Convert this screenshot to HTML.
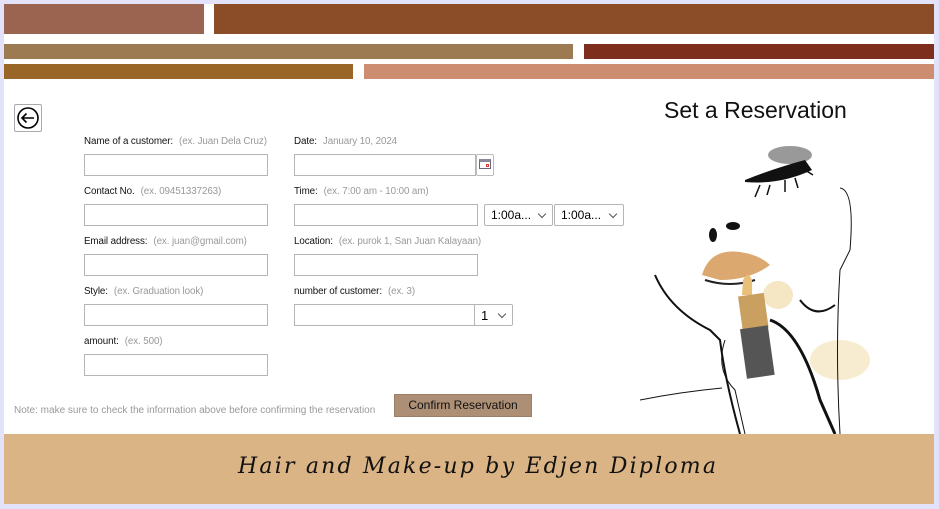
<!DOCTYPE html>
<html><head><meta charset="utf-8"><style>
*{margin:0;padding:0;box-sizing:border-box}
body{width:939px;height:509px;background:#e2e2fb;position:relative;overflow:hidden;font-family:"Liberation Sans",sans-serif}
.a{position:absolute}
.main{left:4px;top:4px;width:930px;height:500px;background:#fff}
.lbl{position:absolute;font-size:9.8px;color:#111;white-space:nowrap;letter-spacing:-0.1px}
.lbl i{font-style:normal;color:#999;margin-left:6px}
.in{position:absolute;border:1px solid #b5b5b5;background:#fff;height:22px}
.sel{position:absolute;border:1px solid #b5b5b5;border-radius:2px;height:22px;font-size:12px;padding:3px 0 0 6px;background:#fff}
.sel:after{content:"";position:absolute;right:7px;top:6px;width:5px;height:5px;border-right:1px solid #555;border-bottom:1px solid #555;transform:rotate(45deg)}
</style></head><body>
<div class="a main"></div>
<div class="a" style="left:4px;top:4px;width:200px;height:30px;background:#9b6450"></div>
<div class="a" style="left:214px;top:4px;width:720px;height:30px;background:#8a4d27"></div>
<div class="a" style="left:4px;top:44px;width:569px;height:15px;background:#9c7b52"></div>
<div class="a" style="left:584px;top:44px;width:350px;height:15px;background:#7d2e1c"></div>
<div class="a" style="left:4px;top:64px;width:349px;height:15px;background:#996628"></div>
<div class="a" style="left:364px;top:64px;width:570px;height:15px;background:#cc8d71"></div>

<div class="a" style="left:14px;top:104px;width:28px;height:28px;border:1px solid #aaa;border-radius:2px"></div>
<svg class="a" style="left:15px;top:105px" width="26" height="26" viewBox="0 0 26 26"><circle cx="13" cy="13" r="10" fill="none" stroke="#000" stroke-width="1.6"/><path d="M19 13H7M11.5 8.5L7 13l4.5 4.5" fill="none" stroke="#000" stroke-width="1.6"/></svg>

<div class="a" style="left:664px;top:97px;font-size:23px;color:#111">Set a Reservation</div>

<div class="lbl" style="left:84px;top:136px">Name of a customer:<i>(ex. Juan Dela Cruz)</i></div>
<div class="in" style="left:84px;top:154px;width:184px"></div>
<div class="lbl" style="left:84px;top:186px">Contact No.<i>(ex. 09451337263)</i></div>
<div class="in" style="left:84px;top:204px;width:184px"></div>
<div class="lbl" style="left:84px;top:236px">Email address:<i>(ex. juan@gmail.com)</i></div>
<div class="in" style="left:84px;top:254px;width:184px"></div>
<div class="lbl" style="left:84px;top:286px">Style:<i>(ex. Graduation look)</i></div>
<div class="in" style="left:84px;top:304px;width:184px"></div>
<div class="lbl" style="left:84px;top:336px">amount:<i>(ex. 500)</i></div>
<div class="in" style="left:84px;top:354px;width:184px"></div>

<div class="lbl" style="left:294px;top:136px">Date:<i>January 10, 2024</i></div>
<div class="in" style="left:294px;top:154px;width:182px"></div>
<div class="a" style="left:476px;top:154px;width:18px;height:22px;border:1px solid #bbb;border-radius:2px"></div>
<div class="a" style="left:479px;top:159px;width:12px;height:10px;border:1px solid #667;border-top:3px solid #889"></div>
<div class="a" style="left:486px;top:164px;width:3px;height:3px;border:1px solid #d33"></div>
<div class="lbl" style="left:294px;top:186px">Time:<i>(ex. 7:00 am - 10:00 am)</i></div>
<div class="in" style="left:294px;top:204px;width:184px"></div>
<div class="sel" style="left:484px;top:204px;width:69px">1:00a...</div>
<div class="sel" style="left:554px;top:204px;width:70px">1:00a...</div>
<div class="lbl" style="left:294px;top:236px">Location:<i>(ex. purok 1, San Juan Kalayaan)</i></div>
<div class="in" style="left:294px;top:254px;width:184px"></div>
<div class="lbl" style="left:294px;top:286px">number of customer:<i>(ex. 3)</i></div>
<div class="in" style="left:294px;top:304px;width:181px"></div>
<div class="sel" style="left:474px;top:304px;width:39px;font-size:13px">1</div>

<div class="a" style="left:14px;top:405px;font-size:10px;color:#999">Note: make sure to check the information above before confirming the reservation</div>
<div class="a" style="left:394px;top:394px;width:138px;height:23px;background:#ac8f74;border:1px solid #9a8068;font-size:12px;color:#111;text-align:center;line-height:21px">Confirm Reservation</div>

<svg class="a" style="left:640px;top:130px" width="250" height="304" viewBox="0 0 250 304">
<ellipse cx="150" cy="25" rx="22" ry="9" fill="#555" opacity=".6"/>
<path d="M105 50 Q135 38 165 30 L172 40 Q140 55 105 52Z" fill="#111"/>
<path d="M120 55l-5 12M130 55l-3 10M145 50l0 12M155 48l3 10M165 40l8 5" stroke="#111" stroke-width="1.5"/>
<ellipse cx="73" cy="105" rx="4" ry="7" fill="#111"/><ellipse cx="93" cy="96" rx="7" ry="4" fill="#111"/>
<path d="M62 145 Q70 118 100 122 Q120 125 130 135 Q110 150 80 150Z" fill="#dba870"/>
<path d="M65 150 Q90 158 115 150" stroke="#222" stroke-width="2" fill="none"/>
<ellipse cx="138" cy="165" rx="15" ry="14" fill="#f5e7c4"/>
<ellipse cx="200" cy="230" rx="30" ry="20" fill="#f8ecd0"/>
<path d="M103 150 Q108 140 112 150 L112 165 L102 165Z" fill="#e8c07a"/>
<rect x="100" y="165" width="26" height="35" fill="#c9a060" transform="rotate(-8 110 180)"/>
<rect x="103" y="198" width="28" height="50" fill="#555" transform="rotate(-8 110 220)"/>
<path d="M15 145 Q30 180 70 200 L80 210 Q85 250 100 304" stroke="#111" stroke-width="2" fill="none"/>
<path d="M130 190 Q160 200 180 270 L195 304" stroke="#111" stroke-width="3" fill="none"/>
<path d="M85 210 Q75 240 95 260 L105 304" stroke="#111" stroke-width="1" fill="none"/>
<path d="M200 58 Q215 60 210 120 L200 140 Q195 220 200 304" stroke="#111" stroke-width="1" fill="none"/>
<path d="M160 170 Q175 190 195 175" stroke="#111" stroke-width="2" fill="none"/>
<path d="M0 270 Q40 262 82 258" stroke="#111" stroke-width="1" fill="none"/>
</svg>

<div class="a" style="left:4px;top:434px;width:930px;height:70px;background:#dbb485"></div>
<div class="a" style="left:238px;top:454px;width:500px;white-space:nowrap;font-family:'DejaVu Serif',serif;font-style:italic;font-size:22px;color:#111;letter-spacing:2.2px">Hair and Make-up by Edjen Diploma</div>
</body></html>
